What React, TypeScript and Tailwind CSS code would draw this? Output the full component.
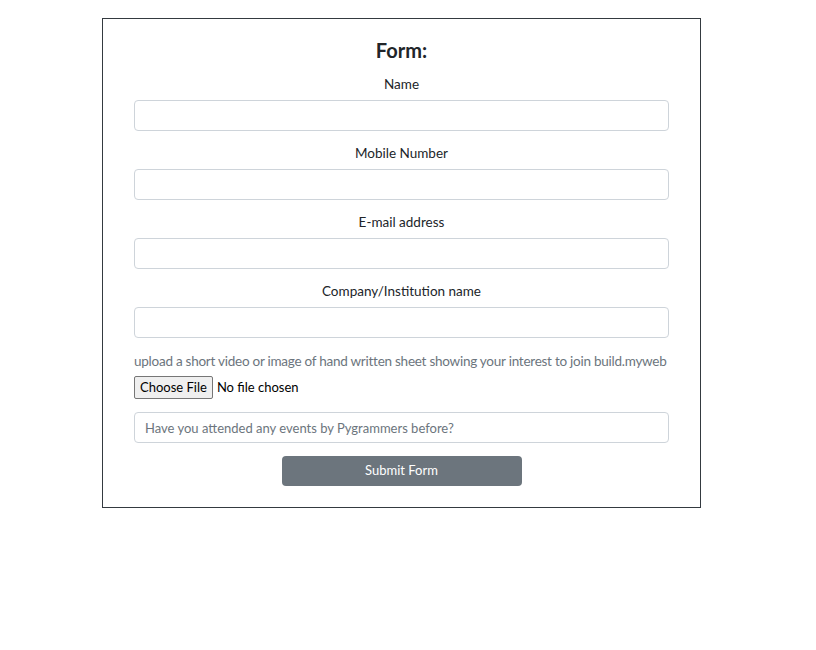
const font = { fontFamily: 'Lato, "Open Sans", sans-serif' };

function Field({ label }: { label: string }) {
  return (
    <div className="flex flex-col">
      <label className="mt-[12px] mb-[5px] text-center text-[13.5px] leading-[21px] text-[#212529]">{label}</label>
      <input
        type="text"
        className="h-[31px] w-full rounded-[4px] border border-[#ced4da] bg-white px-[10px] text-[14px] outline-none"
      />
    </div>
  );
}

export default function App() {
  return (
    <div className="min-h-[650px] bg-white pt-[18px]" style={font}>
      <form className="ml-[102px] w-[599px] border border-[#343a40] px-[31px] pt-[19px] pb-[21px]">
        <h2 className="text-center text-[20px] leading-[24px] font-bold text-[#212529]">Form:</h2>
        <Field label="Name" />
        <Field label="Mobile Number" />
        <Field label="E-mail address" />
        <Field label="Company/Institution name" />
        <p className="mt-[13px] text-[13.5px] leading-[21px] tracking-[-0.25px] text-[#6c757d] whitespace-nowrap">
          upload a short video or image of hand written sheet showing your interest to join build.myweb
        </p>
        <input type="file" className="mt-[4px] block h-[23px] text-[13px] text-black file:mr-[4px] file:h-[23px] file:rounded-[2px] file:border file:border-[#767676] file:bg-[#efefef] file:px-[5px] file:text-black" />
        <input
          type="text"
          placeholder="Have you attended any events by Pygrammers before?"
          className="mt-[13px] h-[31px] w-full rounded-[4px] border border-[#ced4da] bg-white px-[10px] text-[13px] text-[#495057] placeholder:text-[#6c757d] outline-none"
        />
        <div className="mt-[13px] flex justify-center">
          <button
            type="button"
            className="h-[30px] w-[240px] rounded-[4px] bg-[#6c757d] text-[13px] text-white"
          >
            Submit Form
          </button>
        </div>
      </form>
    </div>
  );
}
